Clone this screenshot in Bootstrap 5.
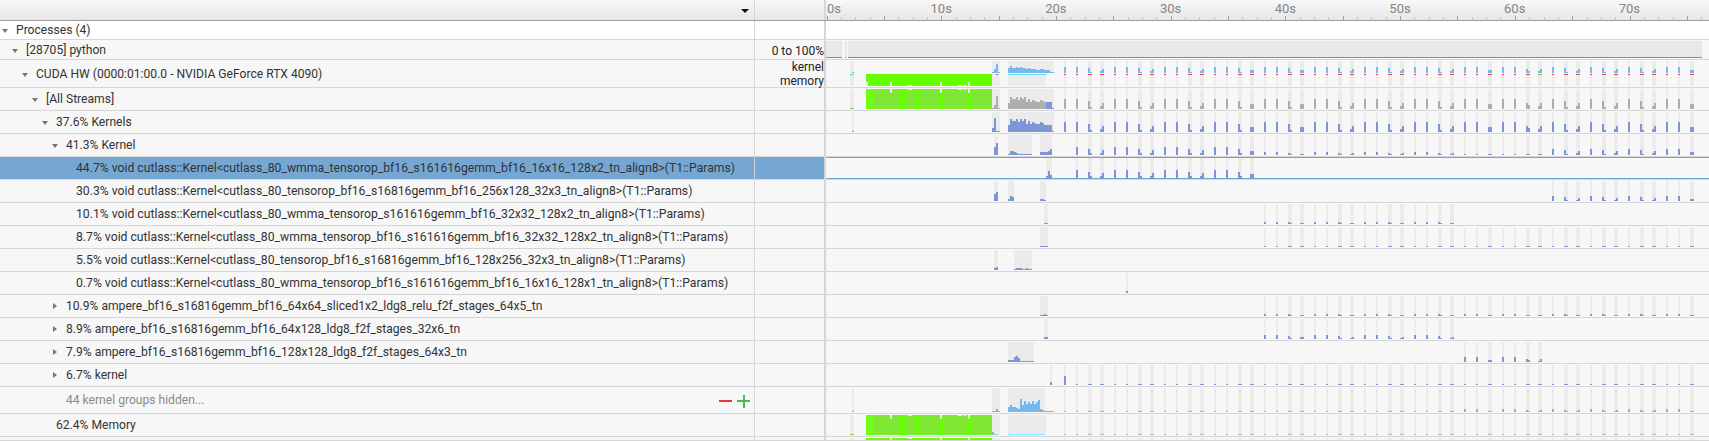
<!DOCTYPE html>
<html lang="en">
<head>
    <meta charset="UTF-8">
    <title>Timeline</title>
    <link href="https://cdn.jsdelivr.net/npm/bootstrap@5.3.1/dist/css/bootstrap.min.css" rel="stylesheet">
    <style>
        html, body { height: 441px; overflow: hidden; }
        body { background: #f7f7f7; font-family: Roboto, "Liberation Sans", sans-serif; font-size: 12.1px; color: #333; }
        .tl-row { border-bottom: 1px solid #d6d6d6; }
        .tl-head { height: 21px; border-bottom: 1px solid #9e9e9e; background: linear-gradient(#f8f8f8, #e6e6e6); }
        .tl-white { background: #fff; }
        .tl-label { width: 755px; flex: none; border-right: 1px solid #d6d6d6; white-space: nowrap; }
        .tl-axis { width: 71px; flex: none; border-right: 2px solid #d6d6d6; line-height: 14px; color: #222; font-size: 12px; }
        .tl-graph { flex: 1 1 auto; min-width: 0; overflow: hidden; }
        .tl-graph svg { display: block; }
        .tl-graph text { font-family: Roboto, "Liberation Sans", sans-serif; font-size: 13px; fill: #858585; }
        .tl-selected .tl-label, .tl-selected .tl-axis { background: #76a7d3; }
        .tl-arrow { width: 10px; flex: none; display: flex; justify-content: center; }
        .tl-text { margin-left: 6px; }
        .tl-long { font-size: 12.2px; }
        .tl-nudge { padding-top: 2px; }
        .tl-open { border-left: 3.5px solid transparent; border-right: 3.5px solid transparent; border-top: 4px solid #777; margin-top: 1px; }
        .tl-closed { border-top: 3.5px solid transparent; border-bottom: 3.5px solid transparent; border-left: 4px solid #777; }
        .tl-sort { border-left: 4px solid transparent; border-right: 4px solid transparent; border-top: 4px solid #111; margin: 1px 5px 0 0; }
        .tl-hidden { color: #8a8a8a; }
        .tl-tools { margin-top: 2px; }
        .tl-minus { width: 13px; height: 2px; background: #ee3434; }
        .tl-plus { width: 13px; height: 13px; margin: 0 4px 0 5px; background: linear-gradient(#4cb850, #4cb850) center / 100% 2px no-repeat, linear-gradient(#4cb850, #4cb850) center / 2px 100% no-repeat; }
    </style>
</head>
<body>
    <div id="timeline"></div>

    <script src="https://cdn.jsdelivr.net/npm/bootstrap@5.3.1/dist/js/bootstrap.bundle.min.js"></script>
    <script>
        const K = 'void cutlass::Kernel<cutlass_80_';
        // top = page y of the row, h = height including the border line
        const rows = [
            { top: 21, h: 19, level: 0, arrow: 'open', text: 'Processes (4)', white: true },
            { top: 40, h: 20, level: 1, arrow: 'open', text: '[28705] python', axis: '0 to 100%', nudge: true },
            { top: 60, h: 28, level: 2, arrow: 'open', text: 'CUDA HW (0000:01:00.0 - NVIDIA GeForce RTX 4090)', axis: 'kernel<br>memory', nudgeLabel: true },
            { top: 88, h: 23, level: 3, arrow: 'open', text: '[All Streams]' },
            { top: 111, h: 23, level: 4, arrow: 'open', text: '37.6% Kernels' },
            { top: 134, h: 23, level: 5, arrow: 'open', text: '41.3% Kernel' },
            { top: 157, h: 23, level: 6, text: '44.7% ' + K + 'wmma_tensorop_bf16_s161616gemm_bf16_16x16_128x2_tn_align8>(T1::Params)', selected: true },
            { top: 180, h: 23, level: 6, text: '30.3% ' + K + 'tensorop_bf16_s16816gemm_bf16_256x128_32x3_tn_align8>(T1::Params)' },
            { top: 203, h: 23, level: 6, text: '10.1% ' + K + 'wmma_tensorop_s161616gemm_bf16_32x32_128x2_tn_align8>(T1::Params)' },
            { top: 226, h: 23, level: 6, text: '8.7% ' + K + 'wmma_tensorop_bf16_s161616gemm_bf16_32x32_128x2_tn_align8>(T1::Params)' },
            { top: 249, h: 23, level: 6, text: '5.5% ' + K + 'tensorop_bf16_s16816gemm_bf16_128x256_32x3_tn_align8>(T1::Params)' },
            { top: 272, h: 23, level: 6, text: '0.7% ' + K + 'wmma_tensorop_bf16_s161616gemm_bf16_16x16_128x1_tn_align8>(T1::Params)' },
            { top: 295, h: 23, level: 5, arrow: 'closed', text: '10.9% ampere_bf16_s16816gemm_bf16_64x64_sliced1x2_ldg8_relu_f2f_stages_64x5_tn' },
            { top: 318, h: 23, level: 5, arrow: 'closed', text: '8.9% ampere_bf16_s16816gemm_bf16_64x128_ldg8_f2f_stages_32x6_tn' },
            { top: 341, h: 23, level: 5, arrow: 'closed', text: '7.9% ampere_bf16_s16816gemm_bf16_128x128_ldg8_f2f_stages_64x3_tn' },
            { top: 364, h: 23, level: 5, arrow: 'closed', text: '6.7% kernel' },
            { top: 387, h: 27, level: 5, text: '44 kernel groups hidden...', hidden: true },
            { top: 414, h: 23, level: 4, text: '62.4% Memory' },
            { top: 437, h: 4, level: 4, text: '' }
        ];

        // The bands that repeat after 20s: x and shape (n narrow, L falling, r rising, e even)
        const bands = [
            [1064,'n'],[1076,'n'],[1088,'L'],[1100,'r'],[1114,'n'],[1126,'n'],[1138,'L'],[1150,'r'],
            [1164,'n'],[1176,'n'],[1188,'L'],[1200,'r'],[1214,'n'],[1226,'n'],[1238,'L'],[1250,'e'],
            [1264,'n'],[1276,'n'],[1288,'L'],[1300,'e'],[1314,'n'],[1326,'n'],[1338,'L'],[1350,'r'],
            [1364,'n'],[1376,'n'],[1388,'L'],[1400,'r'],[1414,'n'],[1426,'n'],[1438,'L'],[1450,'r'],
            [1464,'n'],[1476,'n'],[1488,'e'],[1502,'n'],[1514,'n'],[1526,'b'],[1538,'r'],[1552,'n'],
            [1564,'L'],[1576,'r'],[1590,'n'],[1602,'L'],[1614,'r'],[1628,'n'],[1640,'L'],[1652,'r'],
            [1666,'n'],[1678,'n'],[1690,'e']
        ];
        const shapes = { L: [0.8, 0.2], r: [0.25, 0.6], e: [0.45, 0.45], b: [0.6, 0.35] };
        const BAND = '#ebebeb', KERNEL = '#7e96d6', SKY = '#74b9ee', GREY = '#aeaeae', GREEN = '#66ff00';
        const NOTCHES = [[890, 4], [908, 1], [910, 1], [940, 4], [958, 1], [960, 1], [964, 1], [968, 4]];

        function rect(x, y, w, h, fill) {
            return `<rect x="${x}" y="${y}" width="${w}" height="${h}" fill="${fill}"/>`;
        }

        // Bars of 2px bins sitting on the line y = bottom
        function bins(x, heights, bottom, fill) {
            return heights.map((h, i) => h ? rect(x + i * 2, bottom - h, 2, h, fill) : '').join('');
        }

        function periodic(from, to, top, bottom, size, fill) {
            let out = '';
            bands.filter(b => b[0] >= from && b[0] <= to).forEach(([x, kind]) => {
                const wide = kind !== 'n';
                out += rect(x, top, wide ? 4 : 2, bottom - top, BAND);
                if (!size) return;
                if (!wide) {
                    out += rect(x, bottom - size, 2, size, fill);
                } else {
                    const a = Math.max(1, Math.round(size * shapes[kind][0]));
                    const b = Math.max(1, Math.round(size * shapes[kind][1]));
                    out += rect(x, bottom - a, 2, a, fill) + rect(x + 2, bottom - b, 2, b, fill);
                }
            });
            return out;
        }

        function greenStriped(top, bottom) {
            let out = rect(866, top, 126, bottom - top, GREEN);
            for (let x = 874; x < 992; x += 2) {
                // a few stretches of the block stay plain green
                if (x >= 900 && x < 905 || x >= 915 && x < 919 || x >= 940 && x < 944 || x >= 968 && x < 971) continue;
                out += rect(x, top, 1, bottom - top, '#7ee835');
            }
            out += rect(866, top, 7, bottom - top, '#70ff14');
            NOTCHES.forEach(([x, n]) => { out += rect(x, top, 2, n, BAND); });
            return out;
        }

        const art = {
            40() {
                return rect(826, 41, 16, 16, '#e8e8e8') + rect(845, 41, 1.5, 16, '#e8e8e8') + rect(848, 41, 854, 16, '#e8e8e8')
                    + rect(826, 57, 16, 1, '#8c8c8c') + rect(845, 57, 1, 1, '#8c8c8c') + rect(848, 57, 854, 1, '#8c8c8c');
            },
            60() {
                let s = rect(850, 61, 4, 25, BAND) + rect(992, 61, 8, 12, BAND) + rect(992, 74, 8, 12, BAND);
                s += rect(1008, 61, 46, 12, BAND) + rect(1008, 74, 38, 12, BAND);
                s += periodic(1064, 1700, 61, 86, 0);
                bands.forEach(([x, kind]) => {
                    const wide = kind !== 'n';
                    if (kind === 'n') s += rect(x, 67, 2, 6, SKY);
                    else {
                        const a = Math.round(6 * shapes[kind][0]) || 1, b = Math.round(6 * shapes[kind][1]) || 1;
                        s += rect(x, 73 - a, 2, a, SKY) + rect(x + 2, 73 - b, 2, b, SKY);
                    }
                    s += rect(x, 74, wide ? 4 : 2, 1, x === 1538 ? '#66dd33' : '#f5443c');
                });
                s += rect(852, 72, 2, 1, SKY) + rect(850, 74, 2, 1, GREEN) + rect(852, 74, 2, 1, '#66ddee');
                s += bins(992, [1, 4, 9, 1], 73, SKY) + rect(996, 74, 2, 1, '#f5443c');
                s += bins(1008, [5, 7, 5, 5, 6, 5, 6, 5, 5, 4, 5, 4, 4, 4, 3, 3, 4, 4, 3, 3, 3, 1, 1], 73, SKY);
                s += rect(1008, 74, 38, 1, '#66e0ee');
                s += rect(866, 74, 126, 12, GREEN) + rect(866, 82, 2, 4, '#f4f4f4');
                NOTCHES.forEach(([x, n]) => { s += rect(x, 86 - n, 2, n, BAND); });
                return s;
            },
            88() {
                let s = rect(850, 89, 4, 20, BAND) + rect(992, 89, 8, 20, BAND) + rect(1008, 89, 46, 20, BAND);
                s += periodic(1064, 1700, 89, 109, 10, GREY);
                s += rect(850, 108, 2, 1, GREEN) + rect(852, 108, 2, 1, KERNEL);
                s += greenStriped(89, 109);
                s += bins(992, [1, 4, 13, 1], 109, GREY);
                s += bins(1008, [6, 12, 10, 10, 12, 9, 12, 10, 12, 7, 10, 7, 9, 8, 7, 7, 9, 8, 7], 109, GREY);
                s += bins(1046, [7, 7, 7, 1], 109, KERNEL);
                return s;
            },
            111() {
                let s = rect(852, 112, 2, 20, BAND) + rect(852, 131, 2, 1, KERNEL);
                s += rect(992, 112, 8, 20, BAND) + rect(1008, 112, 46, 20, BAND);
                s += periodic(1064, 1700, 112, 132, 10, KERNEL);
                s += bins(992, [4, 14, 1, 1], 132, KERNEL);
                s += bins(1008, [7, 13, 11, 11, 13, 10, 13, 11, 13, 8, 11, 8, 10, 9, 8, 8, 10, 9, 7, 7, 7, 7, 1], 132, KERNEL);
                return s;
            },
            134() {
                let s = rect(994, 135, 4, 20, BAND) + rect(1008, 135, 24, 20, BAND) + rect(1040, 135, 12, 20, BAND);
                s += bins(994, [8, 12], 155, KERNEL);
                s += bins(1008, [1, 4, 4, 3, 2, 1, 1, 1, 1, 1, 1, 1], 155, KERNEL);
                s += bins(1040, [3, 3, 3, 3, 4, 6], 155, KERNEL);
                s += periodic(1076, 1254, 135, 155, 8, KERNEL);
                s += periodic(1264, 1454, 135, 155, 3, KERNEL);
                s += periodic(1464, 1542, 135, 155, 1, KERNEL);
                s += periodic(1552, 1700, 135, 155, 6, KERNEL);
                return s;
            },
            157() {
                let s = rect(1046, 158, 6, 20, BAND);
                s += periodic(1076, 1254, 158, 178, 8, KERNEL);
                s += bins(1046, [2, 7, 3], 178, KERNEL);
                s += rect(826, 157, 883, 1, '#6fa3d0') + rect(826, 178, 883, 1, '#6fa3d0');
                return s;
            },
            180() {
                let s = rect(994, 181, 4, 20, BAND) + rect(1008, 181, 6, 20, BAND) + rect(1040, 181, 6, 20, BAND);
                s += bins(994, [7, 9], 201, KERNEL) + bins(1008, [2, 5, 4], 201, KERNEL) + bins(1040, [2, 2, 1], 201, KERNEL);
                s += periodic(1552, 1700, 181, 201, 5, KERNEL);
                return s;
            },
            203() {
                let s = rect(1044, 204, 4, 20, BAND) + bins(1044, [1, 1], 224, KERNEL);
                s += periodic(1264, 1454, 204, 224, 2, KERNEL);
                return s;
            },
            226() {
                let s = rect(1040, 227, 8, 20, BAND) + bins(1040, [1, 1, 1, 1], 247, KERNEL);
                s += periodic(1264, 1700, 227, 247, 1, KERNEL);
                return s;
            },
            249() {
                return rect(994, 250, 4, 20, BAND) + rect(1014, 250, 18, 20, BAND)
                    + bins(994, [2, 3], 270, KERNEL) + bins(1014, [1, 2, 2, 2, 1, 1, 2, 1, 1], 270, KERNEL);
            },
            272() {
                return rect(1126, 273, 2, 20, BAND) + rect(1126, 291, 2, 2, KERNEL);
            },
            295() {
                let s = rect(1040, 296, 8, 20, BAND) + bins(1040, [1, 1, 2, 1], 316, KERNEL);
                s += periodic(1264, 1700, 296, 316, 2, KERNEL);
                return s;
            },
            318() {
                let s = rect(1044, 319, 4, 20, BAND) + bins(1044, [2, 2], 339, KERNEL);
                s += periodic(1264, 1454, 319, 339, 4, KERNEL);
                return s;
            },
            341() {
                let s = rect(1008, 342, 26, 20, BAND) + bins(1008, [2, 2, 2, 5, 6, 4, 1, 1, 1, 1, 1, 1, 1], 362, KERNEL);
                s += periodic(1464, 1542, 342, 362, 5, KERNEL);
                return s;
            },
            364() {
                let s = rect(1050, 365, 2, 20, BAND) + rect(1050, 382, 2, 3, KERNEL);
                s += periodic(1064, 1700, 365, 385, 1, KERNEL);
                s += rect(1064, 376, 2, 9, KERNEL);
                return s;
            },
            387() {
                let s = rect(852, 388, 2, 24, BAND) + rect(852, 411, 2, 1, SKY);
                s += rect(992, 388, 8, 24, BAND) + rect(1008, 388, 37, 24, BAND);
                s += bins(992, [1, 1, 3, 1], 412, SKY);
                s += bins(1008, [5, 7, 5, 5, 4, 3, 13, 7, 11, 8, 10, 8, 11, 8, 10, 12, 3, 2, 1, 1, 1, 1, 1], 412, SKY);
                s += periodic(1064, 1454, 388, 412, 1, SKY);
                s += periodic(1464, 1700, 388, 412, 3, SKY);
                return s;
            },
            414() {
                let s = rect(850, 415, 4, 20, BAND) + rect(850, 434, 2, 1, GREEN) + rect(852, 434, 2, 1, '#aaa');
                s += rect(992, 415, 8, 20, BAND) + rect(1008, 415, 38, 20, BAND);
                s += greenStriped(415, 435);
                s += rect(992, 432, 2, 3, '#b5a5b5') + rect(994, 434, 4, 1, '#66e0ee');
                for (let x = 1008; x < 1046; x += 2) s += rect(x, 434, 1, 1, '#66e0ee');
                s += periodic(1064, 1700, 415, 435, 1, '#b4b4b4');
                return s;
            },
            437() {
                let s = rect(850, 438, 4, 3, BAND) + rect(992, 438, 8, 3, BAND) + rect(1008, 438, 2, 3, BAND);
                s += rect(866, 438, 126, 3, GREEN);
                [890, 940, 968].forEach(x => { s += rect(x, 438, 2, 3, BAND); });
                s += rect(908, 438, 4, 1, BAND);
                s += periodic(1064, 1700, 438, 441, 0);
                return s;
            }
        };

        function axisSvg() {
            let s = '';
            for (let i = 0; i * 14.34 < 880; i++) {
                const x = 826.5 + i * 14.34;
                const major = i % 4 === 0;
                s += rect(Math.round(x), major ? 16 : 17, 1, major ? 4 : 3, major ? '#a0a0a0' : '#c4c4c4');
            }
            for (let n = 0; n * 11.47 < 880; n += 10) {
                const x = 826.5 + n * 11.47;
                s += n === 0
                    ? `<text x="827" y="13">0s</text>`
                    : `<text x="${x}" y="13" text-anchor="middle">${n}s</text>`;
            }
            return `<svg width="883" height="20" viewBox="826 0 883 20">${s}</svg>`;
        }

        let html = `<div class="d-flex tl-head">
            <div class="tl-label d-flex justify-content-end align-items-center"><span class="tl-sort"></span></div>
            <div class="tl-axis"></div>
            <div class="tl-graph">${axisSvg()}</div>
        </div>`;

        rows.forEach(r => {
            const arrow = r.arrow ? `<span class="tl-${r.arrow}"></span>` : '';
            const tools = r.hidden ? '<span class="ms-auto d-flex align-items-center tl-tools"><span class="tl-minus"></span><span class="tl-plus"></span></span>' : '';
            const graph = art[r.top] ? art[r.top]() : '';
            const inner = r.h - 1;
            const text = r.text.replace(/</g, '&lt;');
            const textClass = (r.level === 6 ? 'tl-long ' : '') + (r.hidden ? 'tl-hidden' : '');
            const labelNudge = r.nudge || r.nudgeLabel ? 'tl-nudge' : '';
            html += `<div class="d-flex tl-row ${r.white ? 'tl-white' : ''} ${r.selected ? 'tl-selected' : ''}" style="height:${r.h}px">
                <div class="tl-label d-flex align-items-center ${labelNudge}">
                    <span class="tl-arrow" style="margin-left:${r.level * 10}px">${arrow}</span>
                    <span class="tl-text ${textClass}">${text}</span>${tools}
                </div>
                <div class="tl-axis text-end d-flex align-items-center justify-content-end ${r.nudge ? 'tl-nudge' : ''}">${r.axis ? `<span>${r.axis}</span>` : ''}</div>
                <div class="tl-graph"><svg width="883" height="${inner}" viewBox="826 ${r.top} 883 ${inner}" shape-rendering="crispEdges">${graph}</svg></div>
            </div>`;
        });
        document.getElementById('timeline').innerHTML = html;
    </script>
</body>
</html>
